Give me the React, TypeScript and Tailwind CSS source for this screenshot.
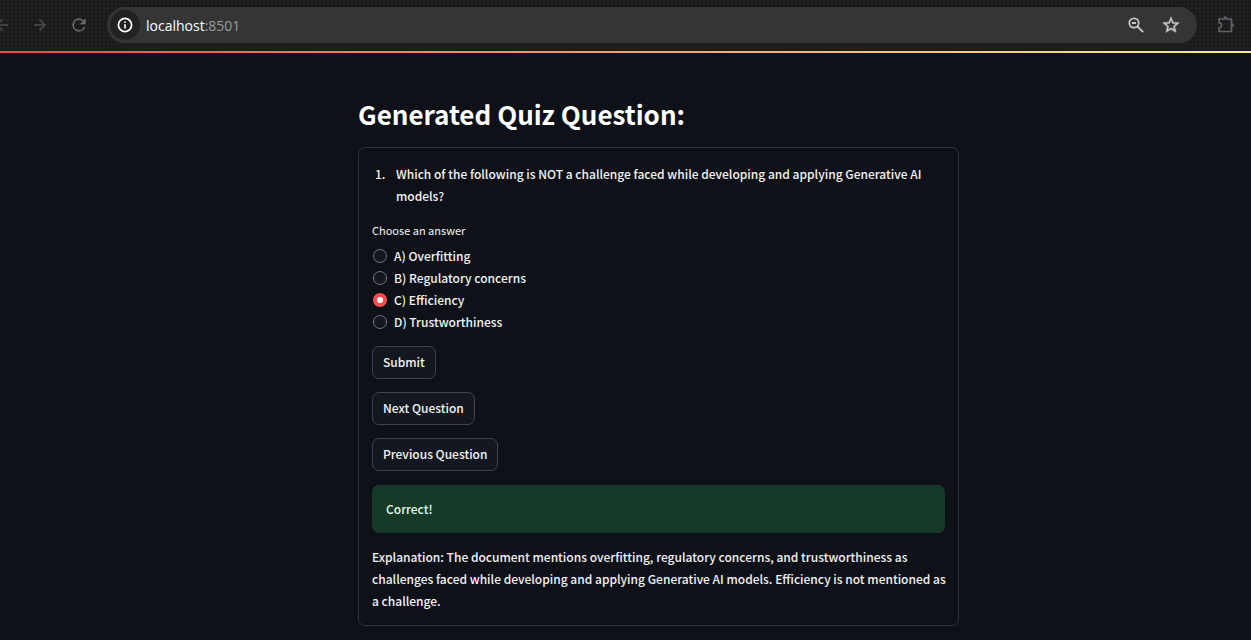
import { useState } from "react";

const answers = ["A) Overfitting", "B) Regulatory concerns", "C) Efficiency", "D) Trustworthiness"];

function BrowserBar() {
  return (
    <header className="flex h-[51px] items-start bg-[#1f1f1f] bg-[radial-gradient(#181818_1px,transparent_1px)] bg-size-[4px_4px] pt-[7px] font-['Open_Sans',sans-serif]">
      <nav className="flex h-9 w-[107px] shrink-0 items-center overflow-hidden text-[#4b4d50]" aria-label="Browser navigation">
        <button type="button" aria-label="Back" className="-ml-[7px] w-[18px] shrink-0">
          <svg viewBox="0 0 24 24" className="size-[18px]" fill="currentColor"><path d="M20 11H7.8l5.6-5.6L12 4l-8 8 8 8 1.4-1.4L7.8 13H20z" /></svg>
        </button>
        <button type="button" aria-label="Forward" className="ml-5 w-[18px] shrink-0">
          <svg viewBox="0 0 24 24" className="size-[18px]" fill="currentColor"><path d="M4 11h12.2l-5.6-5.6L12 4l8 8-8 8-1.4-1.4 5.6-5.6H4z" /></svg>
        </button>
        <button type="button" aria-label="Reload" className="ml-5 w-5 shrink-0 text-[#66696d]">
          <svg viewBox="0 0 24 24" className="size-5" fill="currentColor"><path d="M17.65 6.35A7.95 7.95 0 0 0 12 4a8 8 0 1 0 7.73 10h-2.08A6 6 0 1 1 12 6c1.66 0 3.14.69 4.22 1.78L13 11h7V4z" /></svg>
        </button>
      </nav>
      <div className="flex h-9 grow items-center rounded-full bg-[#353535] pl-[3px] pr-4">
        <button type="button" aria-label="Site information" className="flex size-[30px] items-center justify-center rounded-full bg-[#222222] text-white">
          <svg viewBox="0 0 16 16" className="size-4" fill="none" stroke="currentColor" strokeWidth="1.7"><circle cx="8" cy="8" r="6.6" /><path d="M8 7.2v4.2M8 4.4v1.6" /></svg>
        </button>
        <p className="ml-[6px] grow text-[14px] text-white">localhost<span className="text-[#9b9b9b]">:8501</span></p>
        <button type="button" aria-label="Zoom" className="text-[#c7c7c7]">
          <svg viewBox="0 0 18 18" className="size-[18px]" fill="none" stroke="currentColor" strokeWidth="1.8"><circle cx="7" cy="7" r="4.7" /><path d="M10.5 10.5l5.700 5.700M5 7h4" /></svg>
        </button>
        <button type="button" aria-label="Bookmark" className="ml-4 text-[#c7c7c7]">
          <svg viewBox="0 0 24 24" className="size-5" fill="currentColor" stroke="currentColor" strokeWidth="0.5"><path d="M22 9.24l-7.19-.62L12 2 9.19 8.63 2 9.24l5.46 4.73L5.82 21 12 17.27 18.18 21l-1.63-7.03zM12 15.4l-3.76 2.27 1-4.28-3.32-2.88 4.38-.38L12 6.1l1.71 4.04 4.38.38-3.32 2.88 1 4.28z" /></svg>
        </button>
      </div>
      <button type="button" aria-label="Extensions" className="ml-[19px] mr-[15px] flex h-9 items-center text-[#5f6368]">
        <svg viewBox="0 0 20 20" className="size-5" fill="none" stroke="currentColor" strokeWidth="1.7" strokeLinejoin="round"><path d="M3 4h12.5v12.5H3v-3.6c3.4-.6 3.4-4.7 0-5.300z" /><path d="M7.500 3.200a1.900 1.900 0 0 1 3.800 0zM16.300 8.300a1.900 1.900 0 0 1 0 3.800z" fill="currentColor" stroke="none" /></svg>
      </button>
    </header>
  );
}

function ActionButton({ children }: { children: string }) {
  return (
    <button type="button" className="h-[33px] rounded-[7px] border border-[#41434b] bg-[#131720] px-[10px] pb-[2px] leading-[20px] font-medium">
      {children}
    </button>
  );
}

export default function App() {
  const [answer, setAnswer] = useState(answers[2]);
  return (
    <div className="min-h-screen border-b border-[#05060a] bg-[#0e1118] text-[#f3f3f3]">
      <BrowserBar />
      <div className="h-[2px] bg-linear-to-r from-[#e5484d] to-[#f3ee8b]" />
      <main className="pl-[66px] font-['Noto_Sans_CJK_SC',sans-serif] text-[12px] leading-[22px] font-medium">
        <div className="mx-auto max-w-[601px] pt-[42px] pb-[14px]">
          <h1 className="text-[26px] leading-[38px] font-bold text-white">Generated Quiz Question:</h1>
          <section className="mt-[14px] rounded-[7px] border border-[#303338] px-[13px] pt-[15px] pb-[13px]">
            <ol className="list-none">
              <li className="flex">
                <span className="w-[24px] shrink-0 pl-[3px]">1.</span>
                <span>Which of the following is NOT a challenge faced while developing and applying Generative AI models?</span>
              </li>
            </ol>
            <fieldset className="mt-[13px]">
              <legend className="text-[11px] leading-[20px] font-normal">Choose an answer</legend>
              <div className="mt-[5px]">
                {answers.map((text) => (
                  <label key={text} className="flex h-[22px] items-center gap-[7px] pl-[1px]">
                    <input
                      type="radio"
                      name="answer"
                      checked={answer === text}
                      onChange={() => setAnswer(text)}
                      className="size-[14px] appearance-none rounded-full border border-[#70737a] bg-[#131720] checked:border-[4px] checked:border-[#ff4b4b] checked:bg-white"
                    />
                    {text}
                  </label>
                ))}
              </div>
            </fieldset>
            <div className="mt-[13px] flex flex-col items-start gap-[13px]">
              <ActionButton>Submit</ActionButton>
              <ActionButton>Next Question</ActionButton>
              <ActionButton>Previous Question</ActionButton>
            </div>
            <p role="status" className="mt-[14px] rounded-[7px] bg-[#173928] px-[14px] py-[13px] text-[#dffde9]">Correct!</p>
            <p className="mt-[13px] -mr-2">
              Explanation: The document mentions overfitting, regulatory concerns, and trustworthiness as challenges faced while developing and applying Generative AI models. Efficiency is not mentioned as a challenge.
            </p>
          </section>
        </div>
      </main>
    </div>
  );
}
